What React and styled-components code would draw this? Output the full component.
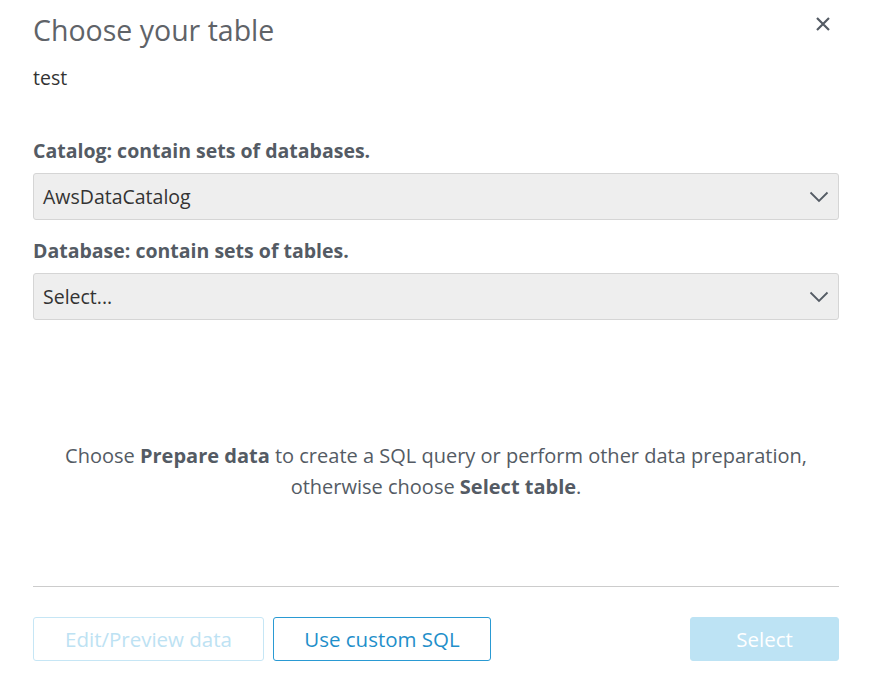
import React from "react";
import styled, { createGlobalStyle } from "styled-components";

const GlobalStyle = createGlobalStyle`
  body {
    margin: 0;
    background: #fff;
    font-family: "Open Sans", "Noto Sans", sans-serif;
  }
`;

const Chevron = () => (
  <svg width="20" height="12" viewBox="0 0 20 12" fill="none">
    <path d="M1.5 1.5L10 10L18.5 1.5" stroke="#545b64" strokeWidth="1.8" />
  </svg>
);

const CloseIcon = () => (
  <svg width="14" height="14" viewBox="0 0 14 14" fill="none">
    <path d="M1 1L13 13M13 1L1 13" stroke="#545b64" strokeWidth="2.2" />
  </svg>
);

class App extends React.Component {
  render() {
    return (
      <Dialog>
        <GlobalStyle />
        <Header>
          <Title>Choose your table</Title>
          <CloseButton aria-label="Close">
            <CloseIcon />
          </CloseButton>
        </Header>
        <SubTitle>test</SubTitle>

        <Fields>
          <Field>
            <Label>Catalog: contain sets of databases.</Label>
            <SelectBox>
              <span>AwsDataCatalog</span>
              <Chevron />
            </SelectBox>
          </Field>
          <Field>
            <Label>Database: contain sets of tables.</Label>
            <SelectBox>
              <span>Select...</span>
              <Chevron />
            </SelectBox>
          </Field>
        </Fields>

        <Hint>
          Choose <b>Prepare data</b> to create a SQL query or perform other data preparation,
          <br />
          otherwise choose <b>Select table</b>.
        </Hint>

        <Divider />

        <Footer>
          <ButtonGroup>
            <Button disabled width="231px">Edit/Preview data</Button>
            <Button width="218px">Use custom SQL</Button>
          </ButtonGroup>
          <Button primary disabled width="149px">Select</Button>
        </Footer>
      </Dialog>
    );
  }
}

const Dialog = styled.div`
  width: 806px;
  padding: 12px 43px 0 33px;
  color: #545b64;
`;

const Header = styled.div`
  display: flex;
  justify-content: space-between;
  align-items: flex-start;
`;

const Title = styled.h2`
  margin: 0;
  font-size: 28.5px;
  font-weight: 400;
  line-height: 36px;
  color: #5f6368;
`;

const CloseButton = styled.button`
  border: none;
  background: none;
  padding: 0;
  margin: 4px 8px 0 0;
  width: 16px;
  height: 16px;
  display: flex;
  align-items: center;
  justify-content: center;
  cursor: pointer;
`;

const SubTitle = styled.div`
  margin-top: 18px;
  font-size: 19.5px;
  line-height: 24px;
  color: #333;
`;

const Fields = styled.div`
  display: flex;
  flex-direction: column;
  gap: 19px;
  margin-top: 49px;
`;

const Field = styled.div`
  display: flex;
  flex-direction: column;
`;

const Label = styled.label`
  font-size: 19.5px;
  font-weight: 700;
  line-height: 24px;
  color: #545b64;
  margin-bottom: 10px;
`;

const SelectBox = styled.div`
  box-sizing: border-box;
  height: 47px;
  display: flex;
  align-items: center;
  justify-content: space-between;
  padding: 0 9px 0 9px;
  background: #eeeeee;
  border: 1px solid #d5d5d5;
  border-radius: 3px;
  font-size: 19.5px;
  color: #333;
`;

const Hint = styled.p`
  margin: 120px 0 0;
  text-align: center;
  font-size: 20px;
  line-height: 31px;
  color: #545b64;

  b {
    font-weight: 700;
  }
`;

const Divider = styled.hr`
  margin: 84px 0 0;
  border: none;
  border-top: 1px solid #cccccc;
`;

const Footer = styled.div`
  display: flex;
  justify-content: space-between;
  margin-top: 30px;
`;

const ButtonGroup = styled.div`
  display: flex;
  gap: 9px;
`;

const Button = styled.button`
  box-sizing: border-box;
  width: ${(p) => p.width};
  height: 44px;
  border-radius: 3px;
  font-family: inherit;
  font-size: 20.5px;
  border: 1px solid ${(p) => (p.primary ? "#bde3f4" : p.disabled ? "#c6e6f5" : "#2a9ad3")};
  background: ${(p) => (p.primary ? "#bde3f4" : "#fff")};
  color: ${(p) => (p.primary ? "#fff" : p.disabled ? "#bde2f3" : "#1f8fca")};
  cursor: ${(p) => (p.disabled ? "default" : "pointer")};
`;

export default App;
